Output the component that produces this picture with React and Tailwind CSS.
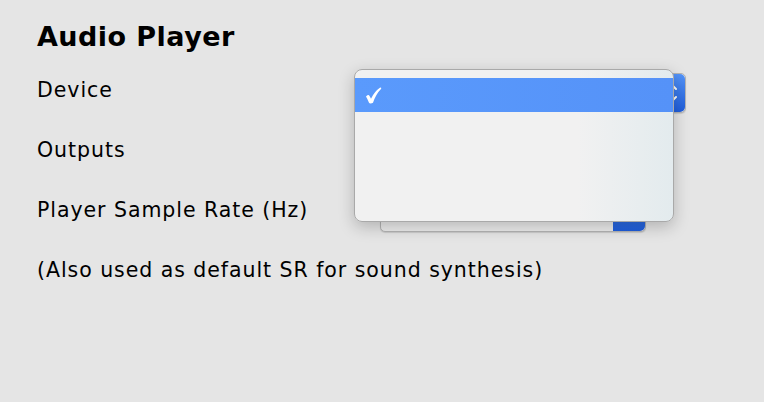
import { useState } from 'react';

// Blue stepper / arrow segment of a mac-style popup button
function SelectArrow({ updown }) {
    return (
        <div className="flex h-full w-[32px] items-center justify-center rounded-r-[5px] bg-gradient-to-b from-[#5393f8] to-[#1f5ddb]">
            {updown ? (
                <svg width="14" height="26" viewBox="0 0 14 26" fill="none" className="ml-[6px]">
                    <path d="M3 9L7 5L11 9" stroke="white" strokeWidth="2" strokeLinecap="round" strokeLinejoin="round" />
                    <path d="M3 17L7 21L11 17" stroke="white" strokeWidth="2" strokeLinecap="round" strokeLinejoin="round" />
                </svg>
            ) : (
                <svg width="10" height="8" viewBox="0 0 10 8" fill="none">
                    <path d="M2 2.5L5 5.5L8 2.5" stroke="white" strokeWidth="1.8" strokeLinecap="round" strokeLinejoin="round" />
                </svg>
            )}
        </div>
    );
}

function PopupButton({ width, updown, value }) {
    return (
        <div
            className={
                width === 'wide'
                    ? 'mt-[6px] flex h-[40px] w-[306px] rounded-[5px] border border-[#b4b4b4] bg-[#ececec] shadow-[0_1px_1px_rgba(0,0,0,0.12)]'
                    : 'mt-[4px] flex h-[40px] w-[266px] rounded-[5px] border border-[#b4b4b4] bg-[#ececec] shadow-[0_1px_1px_rgba(0,0,0,0.12)]'
            }
        >
            <div className="flex flex-1 items-center px-3 text-[16px] text-[#222]">{value}</div>
            <SelectArrow updown={updown} />
        </div>
    );
}

export default function App() {
    // Device menu is open, first (empty) entry checked
    const [open] = useState(true);

    return (
        <div className="relative min-h-screen w-full bg-[#e5e5e5] pl-[37px] font-['DejaVu_Sans','Verdana',sans-serif] text-black">
            <div className="h-[60px] pt-[21px]">
                <h1 className="text-[27px] font-bold leading-[32px] tracking-[0.45px]">Audio Player</h1>
            </div>

            <div className="grid grid-cols-[343px_1fr] text-[20.5px] leading-[24px] tracking-[0.95px]">
                <div className="flex h-[60px] items-center">Device</div>
                <div className="flex h-[60px] items-center">
                    <PopupButton width="wide" updown value="" />
                </div>

                <div className="flex h-[60px] items-center">Outputs</div>
                <div className="h-[60px]" />

                <div className="flex h-[60px] items-center">Player Sample Rate (Hz)</div>
                <div className="flex h-[60px] items-center">
                    <PopupButton updown={false} value="" />
                </div>

                <div className="col-span-2 flex h-[60px] items-center">
                    (Also used as default SR for sound synthesis)
                </div>
            </div>

            {open && (
                <div className="absolute left-[354px] top-[69px] h-[153px] w-[320px] overflow-hidden rounded-[8px] border border-[#a9a9a9] bg-gradient-to-r from-[#f1f1f1] from-70% to-[#e3ebee] shadow-[0_5px_16px_rgba(0,0,0,0.22)]">
                    <div className="mt-[8px] flex h-[34px] items-center bg-gradient-to-r from-[#5a9afc] to-[#5592f8] pl-[10px]">
                        <svg width="17" height="17" viewBox="0 0 17 17">
                            <path
                                d="M1 9.4 Q2.8 7.8 4 8.2 Q5 9.6 6 11.8 Q9.4 4.6 15.2 0.6 Q16.6 0.6 16.2 1.8 Q11 7 8 15.8 Q7 16.6 5.4 16.6 Q4.4 16.6 4 15.8 Q2.6 12 1 9.4 Z"
                                fill="white"
                            />
                        </svg>
                    </div>
                </div>
            )}
        </div>
    );
}
